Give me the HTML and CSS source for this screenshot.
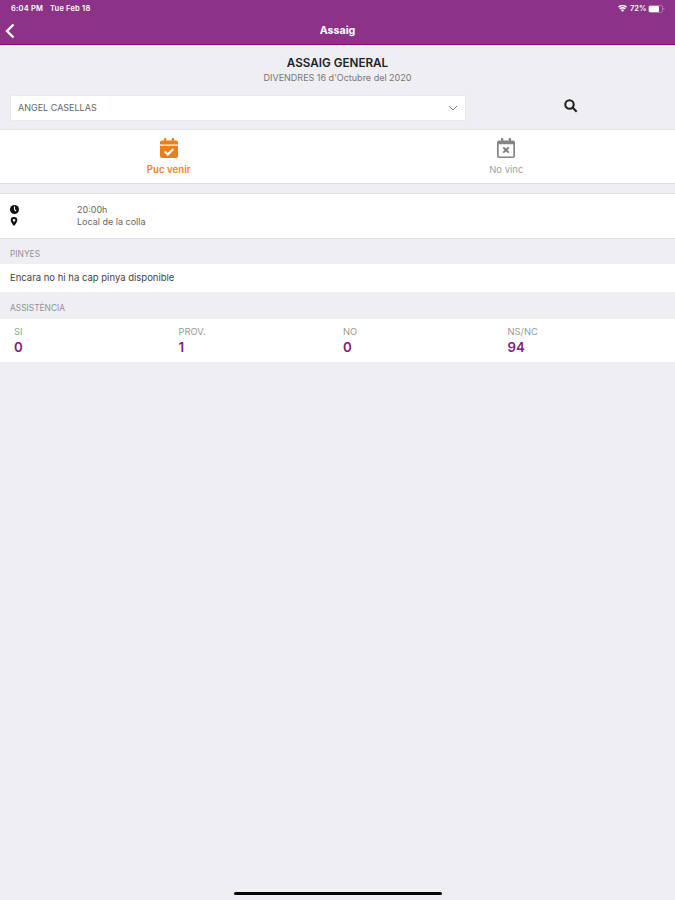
FILE: index.html
```html
<!DOCTYPE html>
<html lang="ca">
<head>
  <meta charset="utf-8">
  <title>Assaig</title>
  <link rel="stylesheet" href="styles.css">
</head>
<body>
  <header class="header">
    <div class="status-bar">
      <span class="time">6:04 PM</span>
      <span class="date">Tue Feb 18</span>
      <div class="status-right">
        <svg class="wifi" viewBox="0 0 18 14"><path d="M9 14L5.800 10a5 5 0 0 1 6.400 0zM4.500 9L2.500 6.400a10.500 10.500 0 0 1 13 0L13.500 9a7 7 0 0 0-9 0zM1.800 5.600L0 3a14 14 0 0 1 18 0L16.200 5.600a11.500 11.500 0 0 0-14.400 0z"/></svg>
        <span class="percent">72%</span>
        <svg class="battery" viewBox="0 0 17 8"><rect class="battery-case" x=".5" y=".5" width="14" height="7" rx="2"/><rect x="1" y="1" width="10" height="6" rx="1"/><path class="battery-tip" d="M15.500 2.700v2.600q1-.3 1-1.300t-1-1.300z"/></svg>
      </div>
    </div>
    <div class="nav-bar">
      <svg class="back" viewBox="0 0 10 16"><path d="M8.500 1.500L2 8l6.500 6.500"/></svg>
      <h1>Assaig</h1>
    </div>
  </header>

  <div class="event-title">
    <h2>ASSAIG GENERAL</h2>
    <p>DIVENDRES 16 d'Octubre del 2020</p>
  </div>

  <div class="search-row">
    <div class="select">
      <span>ANGEL CASELLAS</span>
      <svg class="arrow" viewBox="0 0 10 6"><path d="M1 1l4 4 4-4"/></svg>
    </div>
    <svg class="search" viewBox="0 0 14 14"><circle cx="5.500" cy="5.500" r="4.200"/><path d="M8.700 8.700l4 4"/></svg>
  </div>

  <div class="options">
    <div class="option active">
      <svg viewBox="0 0 18 20"><path d="M2 2.500h2V.7q0-.7.700-.7h.9q.7 0 .7.700V2.500h5.400V.7q0-.7.700-.7h.9q.7 0 .7.700V2.500h2q2 0 2 2V6.500H0V4.500q0-2 2-2zM0 7.700h18V18q0 2-2 2H2q-2 0-2-2z"/><path class="mark" d="M4.800 13.500l3 3 5.500-5.600"/></svg>
      <span>Puc venir</span>
    </div>
    <div class="option">
      <svg viewBox="0 0 18 20"><path fill-rule="evenodd" d="M2 2.500h2V.7q0-.7.700-.7h.9q.7 0 .7.700V2.500h5.400V.7q0-.7.700-.7h.9q.7 0 .7.700V2.500h2q2 0 2 2V18q0 2-2 2H2q-2 0-2-2V4.500q0-2 2-2zM1.700 6.200V18q0 .4.400.4h13.800q.4 0 .4-.4V6.200z"/><path class="cross" d="M6.300 9.300l5.400 5.400M11.700 9.300l-5.400 5.400"/></svg>
      <span>No vinc</span>
    </div>
  </div>

  <div class="info">
    <div class="info-row">
      <svg class="clock" viewBox="0 0 10 10"><circle cx="5" cy="5" r="5"/><path d="M5 1.800V5l1.800 1.700"/></svg>
      <span>20:00h</span>
    </div>
    <div class="info-row">
      <svg class="pin" viewBox="0 0 8 10"><path fill-rule="evenodd" d="M4 10Q.3 5.800.3 3.700a3.700 3.700 0 0 1 7.400 0Q7.700 5.800 4 10zM4 2.200a1.500 1.500 0 1 0 0 3 1.500 1.500 0 0 0 0-3z"/></svg>
      <span>Local de la colla</span>
    </div>
  </div>

  <h3 class="section-title">PINYES</h3>
  <div class="empty">Encara no hi ha cap pinya disponible</div>

  <h3 class="section-title attendance">ASSISTÈNCIA</h3>
  <div class="stats">
    <div class="stat"><span>SI</span><b>0</b></div>
    <div class="stat"><span>PROV.</span><b>1</b></div>
    <div class="stat"><span>NO</span><b>0</b></div>
    <div class="stat"><span>NS/NC</span><b>94</b></div>
  </div>

  <div class="home-bar"></div>
</body>
</html>
```
FILE: styles.css
```css
* {
  box-sizing: border-box;
}

body {
  margin: 0;
  height: 900px;
  display: flex;
  flex-direction: column;
  overflow: hidden;
  background-color: #efeef3;
  font-family: Inter, "Liberation Sans", sans-serif;
  font-size: 9px;
  color: #666666;
}

h1, h2, h3, p {
  margin: 0;
}

svg {
  display: block;
  flex: none;
}

.header {
  height: 45px;
  background-color: #8c3287;
  border-bottom: 1px solid #7d0f78;
  color: #ffffff;
}

.status-bar {
  display: flex;
  align-items: center;
  height: 17px;
  padding: 0 10px 0 11px;
  font-size: 7.5px;
  font-weight: 600;
  letter-spacing: 0.2px;
}

.time {
  width: 39px;
}

.status-right {
  display: flex;
  align-items: center;
  margin-left: auto;
  fill: #ffffff;
}

.wifi {
  width: 9px;
  height: 7px;
  margin-right: 3px;
}

.percent {
  width: 18px;
  letter-spacing: 0;
}

.battery {
  width: 17px;
  height: 8px;
}

.battery-case {
  fill: none;
  stroke: #c48fc1;
  stroke-width: 0.7;
}

.battery-tip {
  fill: #c48fc1;
}

.nav-bar {
  display: grid;
  grid-template-columns: 20px 1fr 20px;
  align-items: center;
  height: 27px;
}

.nav-bar h1 {
  font-size: 10.7px;
  font-weight: 700;
  text-align: center;
}

.back {
  width: 10px;
  height: 16px;
  margin-left: 5px;
  fill: none;
  stroke: #ffffff;
  stroke-width: 2.3;
}

.event-title {
  height: 50px;
  padding-top: 11px;
  text-align: center;
}

.event-title h2 {
  font-size: 11.7px;
  font-weight: 600;
  line-height: 15px;
  color: #222222;
}

.event-title p {
  font-size: 9px;
  line-height: 13px;
  color: #777777;
}

.search-row {
  display: flex;
  height: 34px;
  padding-left: 10px;
}

.select {
  display: flex;
  align-items: center;
  justify-content: space-between;
  width: 456px;
  height: 26px;
  padding: 0 7px 1px;
  background-color: #ffffff;
  border: 1px solid #e9e8ed;
}

.arrow {
  width: 10px;
  height: 6px;
  fill: none;
  stroke: #777777;
}

.search {
  width: 14px;
  height: 14px;
  margin: 4px 0 0 98px;
  fill: none;
  stroke: #222222;
  stroke-width: 2.1;
}

.options {
  display: grid;
  grid-template-columns: 1fr 1fr;
  height: 55px;
  background-color: #ffffff;
  border-top: 1px solid #e5e4e9;
  border-bottom: 1px solid #dddce1;
}

.option {
  display: flex;
  flex-direction: column;
  align-items: center;
  padding-top: 8px;
  font-size: 9.5px;
  line-height: 12px;
  color: #a0a0a0;
  fill: #858585;
}

.option svg {
  width: 18px;
  height: 20px;
  margin-bottom: 6px;
}

.option.active {
  color: #ec8726;
  fill: #e6811d;
  font-size: 9.7px;
  font-weight: 600;
}

.mark {
  fill: none;
  stroke: #ffffff;
  stroke-width: 2.2;
}

.cross {
  fill: none;
  stroke: #777777;
  stroke-width: 1.8;
}

.info {
  height: 46px;
  margin-top: 9px;
  padding: 9px 10px 0;
  background-color: #ffffff;
  border-top: 1px solid #dddce1;
  border-bottom: 1px solid #dddce1;
}

.info-row {
  display: grid;
  grid-template-columns: 67px 1fr;
  align-items: center;
  height: 12.5px;
}

.clock,
.pin {
  width: 9px;
  height: 9px;
  fill: #111111;
}

.clock path {
  fill: none;
  stroke: #ffffff;
  stroke-width: 1.2;
}

.pin {
  width: 8px;
}

.section-title {
  height: 25px;
  padding-left: 10px;
  font-size: 8.4px;
  font-weight: 400;
  line-height: 30px;
  color: #929297;
}

.section-title.attendance {
  height: 27px;
  line-height: 32px;
}

.empty {
  height: 28px;
  padding-left: 10px;
  background-color: #ffffff;
  font-size: 9.5px;
  line-height: 28px;
  color: #444444;
}

.stats {
  display: grid;
  grid-template-columns: repeat(4, 164.5px);
  height: 43px;
  padding: 6px 0 0 14px;
  background-color: #ffffff;
}

.stat span {
  display: block;
  font-size: 9.4px;
  line-height: 13px;
  color: #999999;
}

.stat b {
  display: block;
  font-size: 13.3px;
  font-weight: 600;
  line-height: 19px;
  color: #80207c;
}

.home-bar {
  width: 208px;
  height: 3px;
  margin: auto auto 5px;
  background-color: #050505;
  border-radius: 2px;
}
```
